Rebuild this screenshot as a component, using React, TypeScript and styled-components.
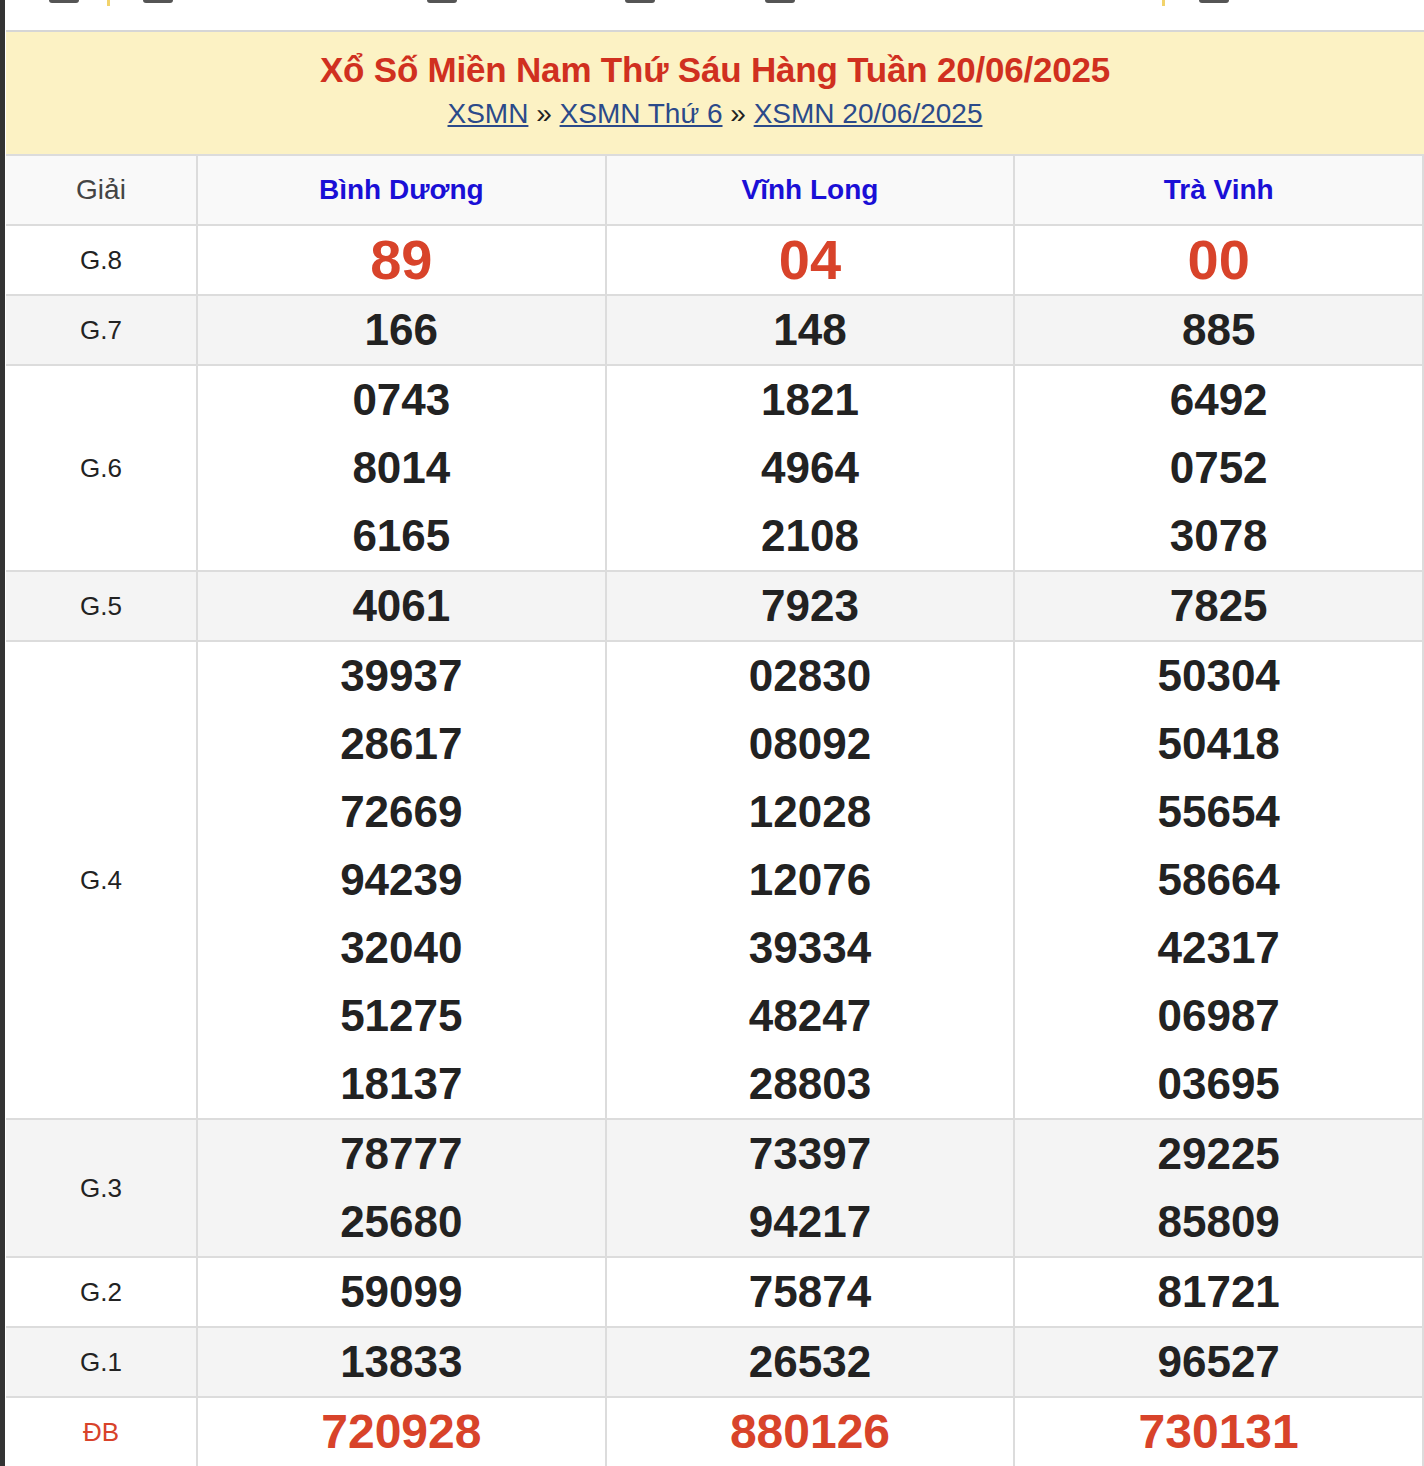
import React, { FC } from 'react'
import styled, { createGlobalStyle } from 'styled-components'

const GlobalStyle = createGlobalStyle`
  body { margin: 0; background: #fff; font-family: "Liberation Sans", Arial, sans-serif; }
`

interface Prize {
  name: string
  values: string[][]
  kind?: 'big' | 'special'
}

const provinces = ['Bình Dương', 'Vĩnh Long', 'Trà Vinh']

const prizes: Prize[] = [
  { name: 'G.8', values: [['89'], ['04'], ['00']], kind: 'big' },
  { name: 'G.7', values: [['166'], ['148'], ['885']] },
  { name: 'G.6', values: [['0743', '8014', '6165'], ['1821', '4964', '2108'], ['6492', '0752', '3078']] },
  { name: 'G.5', values: [['4061'], ['7923'], ['7825']] },
  {
    name: 'G.4',
    values: [
      ['39937', '28617', '72669', '94239', '32040', '51275', '18137'],
      ['02830', '08092', '12028', '12076', '39334', '48247', '28803'],
      ['50304', '50418', '55654', '58664', '42317', '06987', '03695'],
    ],
  },
  { name: 'G.3', values: [['78777', '25680'], ['73397', '94217'], ['29225', '85809']] },
  { name: 'G.2', values: [['59099'], ['75874'], ['81721']] },
  { name: 'G.1', values: [['13833'], ['26532'], ['96527']] },
  { name: 'ĐB', values: [['720928'], ['880126'], ['730131']], kind: 'special' },
]

const App: FC = () => (
  <>
    <GlobalStyle />
    <Page>
      <TopBar>
        <Mark $x={44} /><Divider $x={102} /><Mark $x={138} /><Mark $x={422} /><Mark $x={620} /><Mark $x={760} />
        <Divider $x={1157} /><Mark $x={1194} />
      </TopBar>
      <Frame>
        <Banner>
          <Title>Xổ Số Miền Nam Thứ Sáu Hàng Tuần 20/06/2025</Title>
          <Crumbs>
            <Crumb href="#">XSMN</Crumb> » <Crumb href="#">XSMN Thứ 6</Crumb> » <Crumb href="#">XSMN 20/06/2025</Crumb>
          </Crumbs>
        </Banner>
        <Table>
          <thead>
            <tr>
              <HeadCell $label>Giải</HeadCell>
              {provinces.map((p) => (
                <HeadCell key={p}>{p}</HeadCell>
              ))}
            </tr>
          </thead>
          <tbody>
            {prizes.map((prize, i) => (
              <Row key={prize.name} $striped={i % 2 === 1}>
                <LabelCell $special={prize.kind === 'special'}>{prize.name}</LabelCell>
                {prize.values.map((col, j) => (
                  <NumCell key={j}>
                    {col.map((n) => (
                      <Num key={n} $kind={prize.kind}>{n}</Num>
                    ))}
                  </NumCell>
                ))}
              </Row>
            ))}
          </tbody>
        </Table>
      </Frame>
    </Page>
  </>
)

export default App

const Page = styled.div`
  border-left: 5px solid #333;
  width: 1419px;
`

const TopBar = styled.div`
  position: relative;
  height: 30px;
  overflow: hidden;
`

const Mark = styled.span<{ $x: number }>`
  position: absolute;
  top: -6px;
  left: ${({ $x }) => $x}px;
  width: 30px;
  height: 9px;
  border-radius: 3px;
  background: #555;
`

const Divider = styled.span<{ $x: number }>`
  position: absolute;
  top: 0;
  left: ${({ $x }) => $x}px;
  width: 3px;
  height: 6px;
  background: #f2d36b;
`

const Frame = styled.div`
  margin-left: 1px;
`

const Banner = styled.div`
  background: #fcf2c4;
  border-top: 2px solid #d6d6d6;
  border-bottom: 2px solid #dadada;
  height: 122px;
  box-sizing: content-box;
  display: flex;
  flex-direction: column;
  align-items: center;
  padding-top: 0;
`

const Title = styled.h1`
  margin: 18px 0 0;
  color: #d0301f;
  font-size: 35px;
  font-weight: bold;
  letter-spacing: -0.2px;
`

const Crumbs = styled.div`
  margin-top: 8px;
  font-size: 28px;
  color: #222;
`

const Crumb = styled.a`
  color: #2b4a8a;
  text-decoration: underline;
`

const Table = styled.table`
  width: 100%;
  border-collapse: collapse;
  table-layout: fixed;
  margin-top: -2px;
  col:first-child { width: 190px; }
`

const HeadCell = styled.th<{ $label?: boolean }>`
  height: 68px;
  padding: 0;
  background: #f9f9f9;
  border: 2px solid #dcdcdc;
  border-left: ${({ $label }) => ($label ? 'none' : '2px solid #dcdcdc')};
  width: ${({ $label }) => ($label ? '190px' : 'auto')};
  color: ${({ $label }) => ($label ? '#444' : '#1a0fd6')};
  font-weight: ${({ $label }) => ($label ? 'normal' : 'bold')};
  font-size: 28px;
`

const Row = styled.tr<{ $striped: boolean }>`
  background: ${({ $striped }) => ($striped ? '#f4f4f4' : '#fff')};
`

const LabelCell = styled.td<{ $special: boolean }>`
  border: 2px solid #dcdcdc;
  border-left: none;
  text-align: center;
  font-size: 26px;
  color: ${({ $special }) => ($special ? '#d8432a' : '#222')};
`

const NumCell = styled.td`
  border: 2px solid #dcdcdc;
  padding: 0;
  text-align: center;
  vertical-align: middle;
`

const Num = styled.div<{ $kind?: 'big' | 'special' }>`
  height: 68px;
  line-height: 68px;
  font-weight: bold;
  font-size: ${({ $kind }) => ($kind === 'big' ? '56px' : $kind === 'special' ? '48px' : '44px')};
  color: ${({ $kind }) => ($kind ? '#d8432a' : '#222')};
`
